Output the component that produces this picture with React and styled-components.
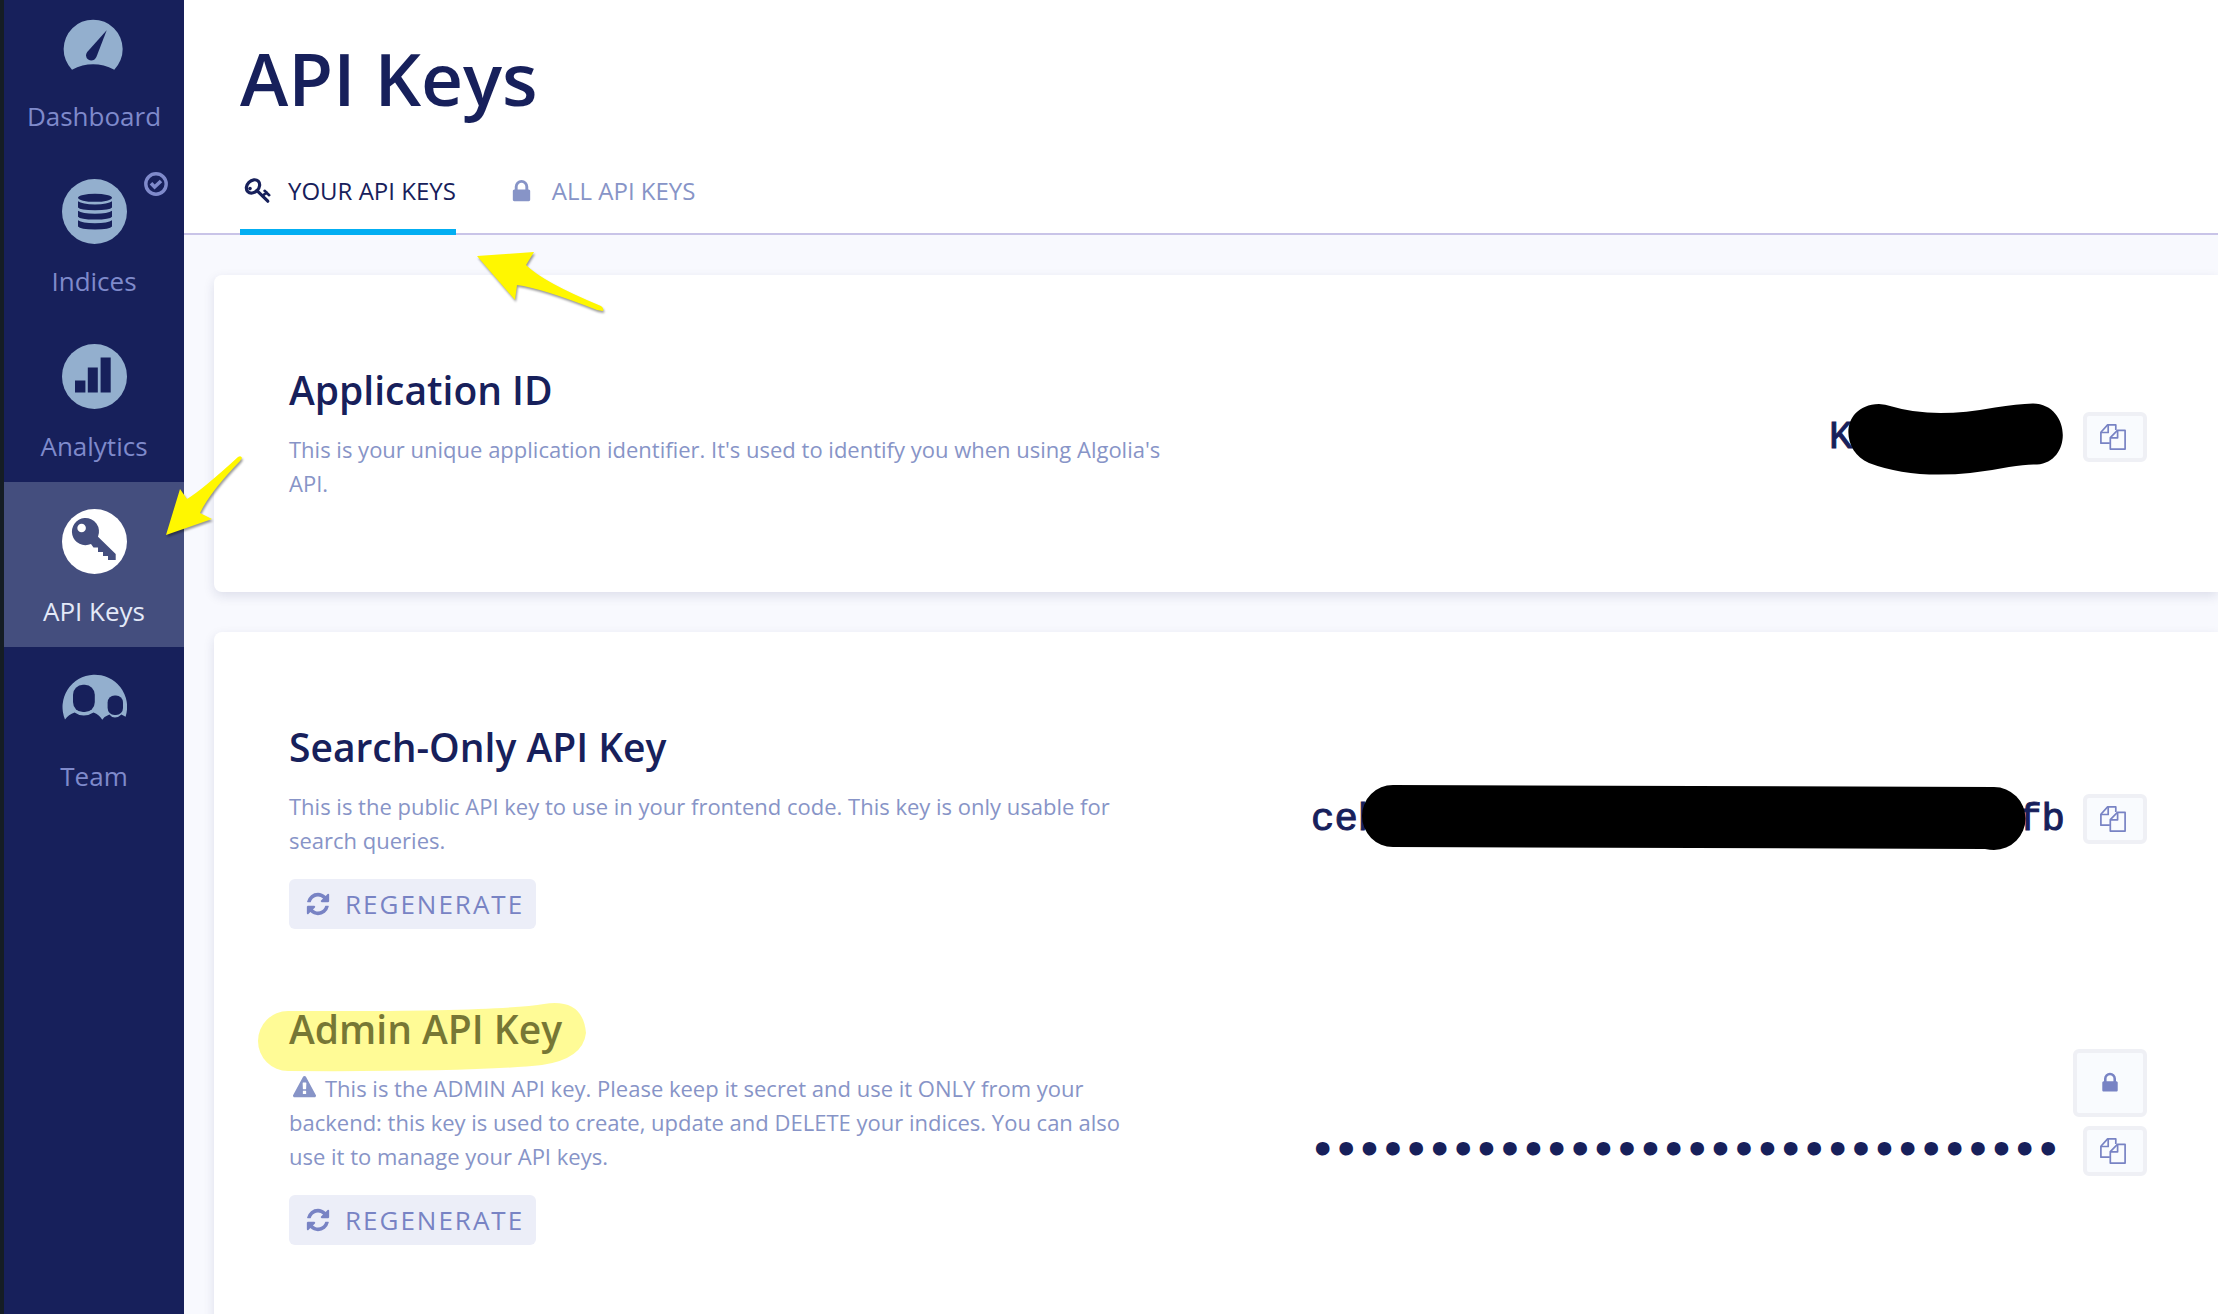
import React, { useState } from 'react';
import styled, { createGlobalStyle } from 'styled-components';

const navy = '#17205b';
const muted = '#8794c7';
const accent = '#7883c4';

const GlobalStyle = createGlobalStyle`
    * {
        box-sizing: border-box;
    }

    body {
        margin: 0;
        background: #f8f9fe;
        color: ${navy};
        font-family: "Open Sans", "Noto Sans", sans-serif;
    }
`;

const Shell = styled.div`
    display: flex;
    height: 100vh;
    overflow: hidden;
    border-left: 4px solid #151d24;
`;

const Sidebar = styled.nav`
    flex: 0 0 180px;
    background: ${navy};
`;

const Menu = styled.ul`
    list-style: none;
    margin: -13px 0 0;
    padding: 0;
`;

const MenuLink = styled.a`
    position: relative;
    display: flex;
    flex-direction: column;
    align-items: center;
    height: 165px;
    padding-top: 27px;
    font-size: 26px;
    line-height: 36px;
    text-decoration: none;
    color: ${props => props.$active ? '#e3e9f8' : '#7f8acb'};
    background: ${props => props.$active ? '#444e7e' : 'transparent'};

    > svg:first-child {
        width: 65px;
        height: 65px;
        margin-bottom: 19px;
        color: ${props => props.$active ? '#fff' : '#93afce'};
    }
`;

const Badge = styled.svg`
    position: absolute;
    top: 20px;
    right: 16px;
    width: 24px;
    height: 24px;
`;

const Main = styled.main`
    position: relative;
    flex: 1;
    min-width: 0;
`;

const Header = styled.header`
    padding: 28px 56px 0;
    background: #fff;
    border-bottom: 2px solid #c9c4e8;
`;

const Title = styled.h1`
    margin: 0;
    font-size: 73px;
    line-height: 100px;
    font-weight: 600;
`;

const Tabs = styled.div`
    display: flex;
    gap: 48px;
    margin-bottom: -2px;
`;

const Tab = styled.a`
    display: flex;
    align-items: center;
    gap: 13px;
    padding: 46px 0 21px;
    border-bottom: 6px solid ${props => props.$active ? '#03aef2' : 'transparent'};
    color: ${props => props.$active ? navy : muted};
    font-size: 24px;
    line-height: 34px;
    text-decoration: none;
    text-transform: uppercase;
`;

const TabIcon = styled.span`
    display: flex;
    justify-content: center;
    width: 35px;
`;

const Content = styled.div`
    display: flex;
    flex-direction: column;
    gap: 40px;
    padding: 40px 0 40px 30px;
`;

const Card = styled.section`
    display: flex;
    flex-direction: column;
    gap: 75px;
    padding: 90px 71px 92px 75px;
    background: #fff;
    border-radius: 8px 0 0 8px;
    box-shadow: 0 4px 12px rgba(23, 32, 91, .12);
`;

const KeyRow = styled.div`
    display: flex;
    align-items: flex-start;
    justify-content: space-between;
`;

const Info = styled.div`
    flex: 0 1 890px;
`;

const KeyTitle = styled.h2`
    position: relative;
    width: fit-content;
    margin: 0 0 17px;
    font-size: 39px;
    line-height: 50px;
    font-weight: 600;
`;

const Description = styled.p`
    margin: 0;
    color: ${muted};
    font-size: 22px;
    line-height: 34px;

    svg {
        margin: 0 9px 0 4px;
        vertical-align: -2px;
    }
`;

const RegenerateButton = styled.button`
    display: flex;
    align-items: center;
    gap: 14px;
    height: 50px;
    margin-top: 22px;
    padding: 0 12px 0 16px;
    border: 0;
    border-radius: 6px;
    background: #eceef8;
    color: ${accent};
    font: inherit;
    font-size: 26px;
    letter-spacing: 2px;
    text-transform: uppercase;
    cursor: pointer;
`;

const KeyActions = styled.div`
    display: flex;
    flex-direction: column;
    align-items: flex-end;
    gap: 9px;
    margin-top: ${props => props.$top}px;
`;

const KeyLine = styled.div`
    position: relative;
    display: flex;
    align-items: center;
    gap: 18px;
`;

const KeyValue = styled.code`
    display: flex;
    justify-content: space-between;
    width: ${props => props.$width}px;
    padding-top: 2px;
    font-family: "Liberation Mono", "Courier New", monospace;
    font-size: 39px;
    line-height: 48px;
    -webkit-text-stroke: ${props => props.$masked ? 3 : 1}px ${navy};
`;

const IconButton = styled.button`
    display: flex;
    align-items: center;
    justify-content: center;
    width: ${props => props.$large ? 74 : 64}px;
    height: ${props => props.$large ? 68 : 50}px;
    padding: 0 ${props => props.$large ? 0 : 4}px 0 0;
    border: 4px solid #eff0f5;
    border-radius: 6px;
    background: #f9fbfe;
    color: ${accent};
    cursor: pointer;
`;

const Marker = styled.svg`
    position: absolute;
    left: ${props => props.$left}px;
    top: ${props => props.$top}px;
    pointer-events: none;
    overflow: visible;
`;

const Arrow = styled(Marker)`
    fill: #fff700;
    filter: drop-shadow(1px 2px 1px rgba(0, 0, 0, .4));
`;

const GaugeIcon = () => (
    <svg viewBox="0 0 65 65" aria-hidden="true">
        <path fill="currentColor" d="M10 55.7A29.5 29.5 0 1 1 52.3 55.7Q31 45 10 55.7z" />
        <path fill={navy} d="M44.7 16.3L34.4 43Q32.5 46.6 29 46.5Q24.6 46 24 41.5Q24 39.5 25.2 38z" />
    </svg>
);

const IndicesIcon = () => (
    <svg viewBox="0 0 65 65" aria-hidden="true">
        <circle cx="32.5" cy="32.5" r="32.5" fill="currentColor" />
        <g fill={navy}>
            <ellipse cx="33" cy="18.8" rx="17" ry="4" />
            <path d="M16 22.3Q20 25.4 33 25.4T50 22.3V28.5Q48 31.3 33 31.3T16 28.5z" />
            <path d="M16 31.8Q20 34.8 33 34.8T50 31.8V37.8Q48 40.6 33 40.6T16 37.8z" />
            <path d="M16 41.2Q20 44.2 33 44.2T50 41.2V47.6Q48 50.6 33 50.6T16 47.6z" />
        </g>
    </svg>
);

const AnalyticsIcon = () => (
    <svg viewBox="0 0 65 65" aria-hidden="true">
        <circle cx="32.5" cy="32.5" r="32.5" fill="currentColor" />
        <path fill={navy} d="M13 36.4h10.4v12H13zM25.8 23.4h10v25h-10zM38.6 13.4h10.1v35H38.6z" />
    </svg>
);

const KeysIcon = () => (
    <svg viewBox="0 0 65 65" aria-hidden="true">
        <circle cx="32.5" cy="32.5" r="32.5" fill="currentColor" />
        <path fill="#444e7e" d="M22.4 9A13.6 13.6 0 0 1 36 27.7L53.7 45V51H46V47H41V43H36V38.4H31.5L29 35A13.6 13.6 0 1 1 22.4 9z" />
        <circle cx="19.6" cy="19" r="4.3" fill="currentColor" />
    </svg>
);

const TeamIcon = () => (
    <svg viewBox="0 0 65 65" aria-hidden="true">
        <path fill="currentColor" d="M3 45.4A32.3 32.3 0 1 1 63.6 42.7L59.4 40.5Q56.5 43.5 53 43.5T47.4 40.5Q43 42 40.3 45.8Q37.5 40.5 31.5 38.4Q27 41.4 21.8 41.4T12.6 38.4Q6.5 40.5 3 45.4z" />
        <rect x="11" y="10.7" width="21.8" height="27.4" rx="10" fill={navy} />
        <rect x="45.6" y="21.4" width="15.4" height="19.6" rx="7" fill={navy} />
    </svg>
);

const CheckBadge = () => (
    <Badge viewBox="0 0 24 24" fill="none" stroke="currentColor" aria-hidden="true">
        <circle cx="12" cy="12" r="10.2" strokeWidth="3.4" />
        <path d="M7 11.2l3.6 3.8 6.4-6" strokeWidth="3.6" />
    </Badge>
);

const TabKeyIcon = () => (
    <svg width="27" height="26" viewBox="0 0 27 26" fill="none" stroke="currentColor" strokeLinecap="round" aria-hidden="true">
        <ellipse cx="9" cy="8.4" rx="7.4" ry="5.8" transform="rotate(-45 9 8.4)" strokeWidth="3.2" />
        <circle cx="6" cy="10.6" r="1.8" fill="currentColor" stroke="none" />
        <path d="M13 12.6L23.8 23.2" strokeWidth="3.2" />
        <path d="M18.6 17.8l4-3.4M20.6 12.8l4.6 4.4" strokeWidth="2.6" />
    </svg>
);

const LockIcon = ({ size }) => (
    <svg width={size} height={size} viewBox="0 0 1792 1792" fill="currentColor" aria-hidden="true">
        <path d="M640 768h512v-192q0-106-75-181t-181-75-181 75-75 181v192zm832 96v576q0 40-28 68t-68 28h-960q-40 0-68-28t-28-68v-576q0-40 28-68t68-28h32v-192q0-184 132-316t316-132 316 132 132 316v192h32q40 0 68 28t28 68z" />
    </svg>
);

const CopyIcon = () => (
    <svg width="26" height="26" viewBox="0 0 26 26" fill="none" stroke="currentColor" strokeWidth="1.7" strokeLinejoin="round" aria-hidden="true">
        <path d="M9.8 19.2H.9V8.2L7.6.9h8.2v5" />
        <path d="M8.2.9v7.6H.9" />
        <path d="M17.4 6.4h7.7v18.7H10.3V13.6z" />
        <path d="M17.6 6.4v7.4h-7.3" />
    </svg>
);

const RefreshIcon = () => (
    <svg width="26" height="26" viewBox="0 0 1792 1792" fill="currentColor" aria-hidden="true">
        <path d="M1639 1056q0 5-1 7-64 268-268 434.5t-478 166.5q-146 0-282.5-55t-243.5-157l-129 129q-19 19-45 19t-45-19-19-45v-448q0-26 19-45t45-19h448q26 0 45 19t19 45-19 45l-137 137q71 66 161 102t187 36q134 0 250-65t186-179q11-17 53-117 8-23 30-23h192q13 0 22.5 9.5t9.5 22.5zm25-800v448q0 26-19 45t-45 19h-448q-26 0-45-19t-19-45 19-45l138-138q-148-137-349-137-134 0-250 65t-186 179q-11 17-53 117-8 23-30 23h-199q-13 0-22.5-9.5t-9.5-22.5v-7q65-268 270-434.5t480-166.5q146 0 284 55.5t245 156.5l130-129q19-19 45-19t45 19 19 45z" />
    </svg>
);

const WarningIcon = () => (
    <svg width="23" height="23" viewBox="0 0 1792 1792" fill="currentColor" aria-hidden="true">
        <path d="M1024 1375v-190q0-14-9.5-23.5t-22.5-9.5h-192q-13 0-22.5 9.5t-9.5 23.5v190q0 14 9.5 23.5t22.5 9.5h192q13 0 22.5-9.5t9.5-23.5zm-2-374l18-459q0-12-10-19-13-11-24-11h-220q-11 0-24 11-10 7-10 21l17 457q0 10 10 16.5t24 6.5h185q14 0 23.5-6.5t10.5-16.5zm-14-934l768 1408q35 63-2 126-17 29-46.5 46t-63.5 17h-1536q-34 0-63.5-17t-46.5-46q-37-63-2-126l768-1408q17-31 47-49t65-18 65 18 47 49z" />
    </svg>
);

const menuItems = [
    { name: 'Dashboard', icon: GaugeIcon },
    { name: 'Indices', icon: IndicesIcon, checked: true },
    { name: 'Analytics', icon: AnalyticsIcon },
    { name: 'API Keys', icon: KeysIcon },
    { name: 'Team', icon: TeamIcon }
];

const Regenerate = () => (
    <RegenerateButton type="button"><RefreshIcon />Regenerate</RegenerateButton>
);

const CopyButton = () => (
    <IconButton type="button" aria-label="Copy"><CopyIcon /></IconButton>
);

function App () {
    const [ page, setPage ] = useState('API Keys');
    const [ tab, setTab ] = useState('yours');

    return (
        <Shell>
            <GlobalStyle />
            <Sidebar>
                <Menu>
                    {menuItems.map(({ name, icon: Icon, checked }) => (
                        <li key={name}>
                            <MenuLink href="#" $active={page === name} onClick={() => setPage(name)}>
                                <Icon />
                                {name}
                                {checked && <CheckBadge />}
                            </MenuLink>
                        </li>
                    ))}
                </Menu>
            </Sidebar>

            <Main>
                <Header>
                    <Title>API Keys</Title>
                    <Tabs>
                        <Tab href="#" $active={tab === 'yours'} onClick={() => setTab('yours')}>
                            <TabIcon><TabKeyIcon /></TabIcon>
                            Your API Keys
                        </Tab>
                        <Tab href="#" $active={tab === 'all'} onClick={() => setTab('all')}>
                            <TabIcon><LockIcon size={27} /></TabIcon>
                            All API Keys
                        </Tab>
                    </Tabs>
                </Header>

                <Content>
                    <Card>
                        <KeyRow>
                            <Info>
                                <KeyTitle>Application ID</KeyTitle>
                                <Description>
                                    This is your unique application identifier. It's used to identify you when using Algolia's API.
                                </Description>
                            </Info>
                            <KeyActions $top={47}>
                                <KeyLine>
                                    <KeyValue $width={236}>K</KeyValue>
                                    <CopyButton />
                                    <Marker $left={20} $top={-9} width="214" height="72" viewBox="0 0 214 72">
                                        <path d="M30 1Q36 1 43 3.5Q84 16 146 4.5Q168 1 184 .4C222 1 224 59 188 61.6Q178 61 160 64Q75 81 20 60C-9 48-9 2 30 1z" />
                                    </Marker>
                                </KeyLine>
                            </KeyActions>
                        </KeyRow>
                    </Card>

                    <Card>
                        <KeyRow>
                            <Info>
                                <KeyTitle>Search-Only API Key</KeyTitle>
                                <Description>
                                    This is the public API key to use in your frontend code. This key is only usable for search queries.
                                </Description>
                                <Regenerate />
                            </Info>
                            <KeyActions $top={72}>
                                <KeyLine>
                                    <KeyValue $width={754}>
                                        <span>ceb</span>
                                        <span>fb</span>
                                    </KeyValue>
                                    <CopyButton />
                                    <Marker $left={51} $top={-9} width="664" height="65" viewBox="0 0 664 65">
                                        <path d="M31 0L632 2A31.5 31.5 0 0 1 632 65Q628 65 623 64L31 62A31 31 0 0 1 31 0z" />
                                    </Marker>
                                </KeyLine>
                            </KeyActions>
                        </KeyRow>

                        <KeyRow>
                            <Info>
                                <KeyTitle>
                                    Admin API Key
                                    <Marker $left={-31} $top={-1} width="328" height="68" viewBox="0 0 328 68">
                                        <path fill="rgba(255, 246, 0, .41)" d="M30 8Q240 9 286 1Q325-5 328 30Q325 56 284 62Q220 69 30 68A30 30 0 0 1 30 8z" />
                                    </Marker>
                                </KeyTitle>
                                <Description>
                                    <WarningIcon />
                                    This is the ADMIN API key. Please keep it secret and use it ONLY from your<br />
                                    backend: this key is used to create, update and DELETE your indices. You can also<br />
                                    use it to manage your API keys.
                                </Description>
                                <Regenerate />
                            </Info>
                            <KeyActions $top={45}>
                                <IconButton type="button" $large aria-label="Reveal key"><LockIcon size={24} /></IconButton>
                                <KeyLine>
                                    <KeyValue $width={754} $masked>{'•'.repeat(32)}</KeyValue>
                                    <CopyButton />
                                </KeyLine>
                            </KeyActions>
                        </KeyRow>
                    </Card>
                </Content>

                <Arrow $left={293} $top={252} width="127" height="59" viewBox="0 0 127 59">
                    <path d="M0 4L57 0L49 13Q66 30 124 54Q127 56 126 59L120 58Q64 36 40 33L38 48z" />
                </Arrow>
                <Arrow $left={-18} $top={456} width="76" height="79" viewBox="0 0 76 79">
                    <path d="M0 79L14 33L21 43Q36 34 72 1Q75-1 76 2L74 5Q44 36 34 57L46 63z" />
                </Arrow>
            </Main>
        </Shell>
    )
}

export default App
